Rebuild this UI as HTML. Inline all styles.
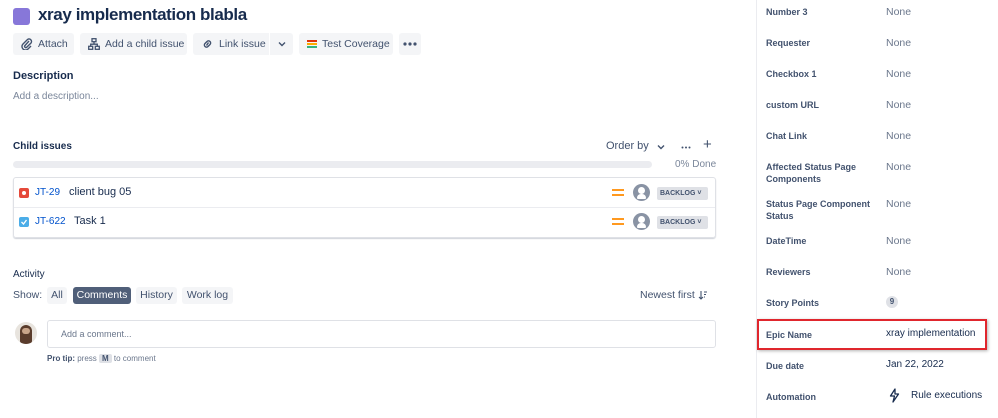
<!DOCTYPE html>
<html><head><meta charset="utf-8"><style>
*{margin:0;padding:0;box-sizing:border-box}
body{width:998px;height:418px;background:#fff;font-family:"Liberation Sans",sans-serif;color:#172b4d;position:relative;overflow:hidden}
.a{position:absolute;white-space:nowrap}
.btn{position:absolute;top:33px;height:22px;background:#f4f5f7;border-radius:3px;font-size:10.5px;color:#42526e;display:flex;align-items:center;padding-left:8px;gap:5px;white-space:nowrap;overflow:hidden}
.lab{position:absolute;left:766px;font-size:9px;font-weight:bold;color:#42526e;line-height:12px;white-space:nowrap}
.val{position:absolute;left:886px;font-size:10.5px;color:#6b778c;white-space:nowrap}
.bk{position:absolute;left:657px;width:51px;height:13px;background:#dfe1e6;border-radius:2px;font-size:7px;font-weight:bold;color:#42526e;line-height:13px;padding-left:3px;white-space:nowrap;overflow:hidden}
.pr{position:absolute;left:612px;width:12px;height:7px;border-top:2px solid #ff991f;border-bottom:2px solid #ff991f}
.av{position:absolute;left:633px;width:17px;height:17px;border-radius:50%;background:#8993a4}
.av:before{content:"";position:absolute;left:5px;top:3px;width:7px;height:7px;border-radius:50%;background:#fff}
.av:after{content:"";position:absolute;left:4px;top:10px;width:9px;height:5px;border-radius:4px 4px 1px 1px;background:#fff}
.tab{position:absolute;top:287px;height:17px;background:#f4f5f7;border-radius:3px;font-size:10.5px;color:#42526e;line-height:17px;text-align:center;white-space:nowrap}
</style></head><body>
<div class="a" style="left:13px;top:8px;width:17px;height:17px;background:#8777d9;border-radius:3px"></div>
<div class="a" style="left:38px;top:5px;font-size:17px;font-weight:bold;letter-spacing:-0.4px;color:#172b4d">xray implementation blabla</div>

<div class="btn" style="left:13px;width:61px"><svg width="12" height="12" viewBox="0 0 12 12"><path d="M8 3L4 7.5a1.2 1.2 0 0 0 1.7 1.7L10 5a2.5 2.5 0 0 0-3.5-3.5L2 6a3.5 3.5 0 0 0 5 5l3-3" fill="none" stroke="#42526e" stroke-width="1.4"/></svg>Attach</div>
<div class="btn" style="left:80px;width:107px"><svg width="12" height="12" viewBox="0 0 12 12" fill="none" stroke="#42526e" stroke-width="1.3"><rect x="4" y="0.7" width="4" height="3"/><rect x="0.7" y="8.3" width="4" height="3"/><rect x="7.3" y="8.3" width="4" height="3"/><path d="M6 3.7v2.5M2.7 8.3V6.2h6.6v2.1"/></svg>Add a child issue</div>
<div class="btn" style="left:193px;width:76px;border-radius:3px 0 0 3px"><svg width="13" height="12" viewBox="0 0 13 12" fill="none" stroke="#42526e" stroke-width="1.4"><path d="M5.5 7.5l2-3M5 4.5l1-1a2 2 0 0 1 3 3l-1 1M8 7.5l-1 1a2 2 0 0 1-3-3l1-1"/></svg>Link issue</div>
<div class="btn" style="left:270px;width:23px;border-radius:0 3px 3px 0;padding-left:8px"><svg width="8" height="6" viewBox="0 0 8 6"><path d="M1 1.5l3 3 3-3" fill="none" stroke="#42526e" stroke-width="1.4"/></svg></div>
<div class="btn" style="left:299px;width:94px"><svg width="10" height="10" viewBox="0 0 10 10"><rect y="1" width="10" height="2" fill="#de350b"/><rect y="4" width="10" height="2" fill="#ffab00"/><rect y="7" width="10" height="2" fill="#36b37e"/></svg>Test Coverage</div>
<div class="btn" style="left:399px;width:22px;padding-left:4px"><svg width="14" height="4" viewBox="0 0 14 4"><circle cx="2" cy="2" r="1.6" fill="#42526e"/><circle cx="7" cy="2" r="1.6" fill="#42526e"/><circle cx="12" cy="2" r="1.6" fill="#42526e"/></svg></div>

<div class="a" style="left:13px;top:70px;font-size:11px;font-weight:bold;color:#172b4d">Description</div>
<div class="a" style="left:13px;top:91px;font-size:10px;color:#7a869a">Add a description...</div>

<div class="a" style="left:13px;top:141px;font-size:10px;font-weight:bold;color:#172b4d">Child issues</div>
<div class="a" style="left:606px;top:140px;font-size:11px;color:#42526e">Order by</div>
<svg class="a" style="left:657px;top:144px" width="8" height="6" viewBox="0 0 8 6"><path d="M1 1.5l3 3 3-3" fill="none" stroke="#42526e" stroke-width="1.4"/></svg>
<svg class="a" style="left:681px;top:146px" width="10" height="3" viewBox="0 0 10 3"><circle cx="1.5" cy="1.5" r="1" fill="#42526e"/><circle cx="5" cy="1.5" r="1" fill="#42526e"/><circle cx="8.5" cy="1.5" r="1" fill="#42526e"/></svg>
<div class="a" style="left:703px;top:136px;font-size:15px;color:#42526e">+</div>
<div class="a" style="left:13px;top:161px;width:639px;height:7px;background:#ebecf0;border-radius:4px"></div>
<div class="a" style="left:675px;top:159px;font-size:10px;color:#7a869a">0% Done</div>

<div class="a" style="left:13px;top:177px;width:703px;height:61px;border:1px solid #dfe1e6;border-radius:3px;box-shadow:0 1px 1px rgba(9,30,66,.2)"></div>
<div class="a" style="left:14px;top:207px;width:701px;height:1px;background:#ebecf0"></div>
<div class="a" style="left:19px;top:188px;width:10px;height:10px;background:#e5493a;border-radius:2px"></div>
<div class="a" style="left:22px;top:191px;width:4px;height:4px;background:#fff;border-radius:50%"></div>
<div class="a" style="left:35px;top:187px;font-size:10px;color:#0052cc">JT-29</div>
<div class="a" style="left:69px;top:186px;font-size:11px;color:#172b4d">client bug 05</div>
<div class="a" style="left:19px;top:217px;width:10px;height:10px;background:#4bade8;border-radius:2px"></div>
<svg class="a" style="left:20px;top:218px" width="8" height="8" viewBox="0 0 8 8"><path d="M1.5 4l2 2 3-4" fill="none" stroke="#fff" stroke-width="1.3"/></svg>
<div class="a" style="left:35px;top:216px;font-size:10px;color:#0052cc">JT-622</div>
<div class="a" style="left:74px;top:215px;font-size:11px;color:#172b4d">Task 1</div>
<div class="pr" style="top:189px"></div><div class="pr" style="top:218px"></div>
<div class="av" style="top:184px"></div><div class="av" style="top:213px"></div>
<div class="bk" style="top:187px">BACKLOG ˅</div><div class="bk" style="top:216px">BACKLOG ˅</div>

<div class="a" style="left:13px;top:269px;font-size:10px;color:#172b4d">Activity</div>
<div class="a" style="left:13px;top:289px;font-size:10.5px;color:#42526e">Show:</div>
<div class="tab" style="left:47px;width:20px">All</div>
<div class="tab" style="left:73px;width:58px;background:#505f79;color:#fff">Comments</div>
<div class="tab" style="left:136px;width:41px">History</div>
<div class="tab" style="left:182px;width:51px">Work log</div>
<div class="a" style="left:640px;top:289px;font-size:10.5px;color:#42526e">Newest first</div>
<svg class="a" style="left:698px;top:290px" width="10" height="10" viewBox="0 0 10 10" fill="none" stroke="#42526e" stroke-width="1.1"><path d="M3 1v8M1 7l2 2 2-2M6 2h3M6 4.5h2M6 7h1"/></svg>

<div class="a" style="left:15px;top:322px;width:22px;height:22px;border-radius:50%;background:#e8e4de;overflow:hidden"><div style="position:absolute;left:5px;top:3px;width:12px;height:19px;border-radius:6px 6px 3px 3px;background:#5a3c2c"></div><div style="position:absolute;left:7px;top:6px;width:8px;height:6px;border-radius:3px;background:#c9a58a"></div></div>
<div class="a" style="left:47px;top:320px;width:669px;height:28px;border:1px solid #dfe1e6;border-radius:3px"></div>
<div class="a" style="left:61px;top:329px;font-size:9px;color:#6b778c">Add a comment...</div>
<div class="a" style="left:47px;top:354px;font-size:8px;color:#6b778c"><b style="color:#42526e">Pro tip:</b> press <span style="background:#dfe1e6;padding:0 3px;border-radius:2px;font-weight:bold;color:#42526e">M</span> to comment</div>

<div class="a" style="left:756px;top:0;width:1px;height:418px;background:#ebecf0"></div>
<div class="lab" style="top:6px">Number 3</div><div class="val" style="top:6px">None</div>
<div class="lab" style="top:37px">Requester</div><div class="val" style="top:37px">None</div>
<div class="lab" style="top:68px">Checkbox 1</div><div class="val" style="top:68px">None</div>
<div class="lab" style="top:99px">custom URL</div><div class="val" style="top:99px">None</div>
<div class="lab" style="top:130px">Chat Link</div><div class="val" style="top:130px">None</div>
<div class="lab" style="top:161px">Affected Status Page<br>Components</div><div class="val" style="top:161px">None</div>
<div class="lab" style="top:198px">Status Page Component<br>Status</div><div class="val" style="top:198px">None</div>
<div class="lab" style="top:235px">DateTime</div><div class="val" style="top:235px">None</div>
<div class="lab" style="top:266px">Reviewers</div><div class="val" style="top:266px">None</div>
<div class="lab" style="top:297px">Story Points</div>
<div class="a" style="left:886px;top:296px;width:12px;height:12px;border-radius:6px;background:#dfe1e6;font-size:8px;font-weight:bold;color:#42526e;text-align:center;line-height:12px">9</div>
<div class="a" style="left:757px;top:319px;width:230px;height:31px;border:2px solid #e0262d;box-shadow:1px 1px 3px rgba(0,0,0,.3)"></div>
<div class="lab" style="top:329px">Epic Name</div><div class="val" style="top:328px;color:#172b4d;font-size:10px">xray implementation</div>
<div class="lab" style="top:391px;top:360px">Due date</div><div class="val" style="top:359px;color:#172b4d;font-size:10px">Jan 22, 2022</div>
<div class="lab" style="top:391px">Automation</div>
<svg class="a" style="left:889px;top:388px" width="11" height="15" viewBox="0 0 11 15"><path d="M6 1L1.5 8h4l-1.5 6 5.5-8H6z" fill="none" stroke="#172b4d" stroke-width="1.3" stroke-linejoin="round"/></svg>
<div class="val" style="left:911px;top:390px;color:#172b4d;font-size:10px">Rule executions</div>
</body></html>
